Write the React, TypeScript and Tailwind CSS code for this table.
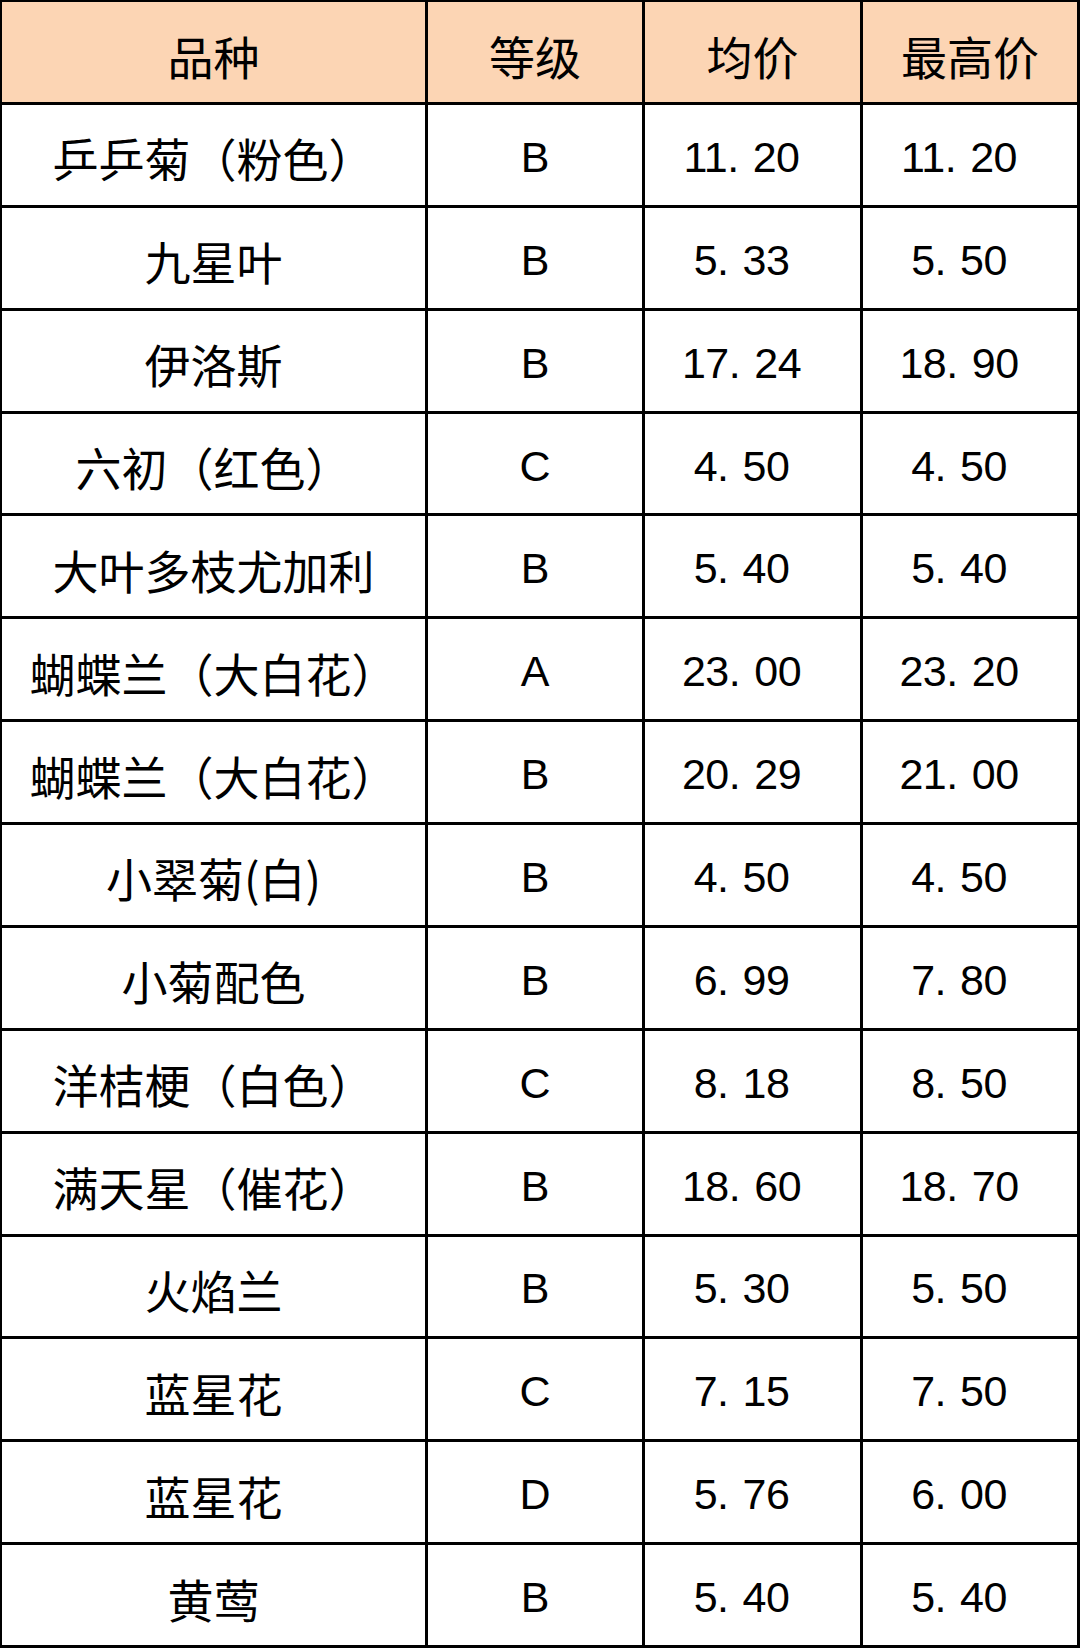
import React from 'react'

type Row = { name: string; grade: string; avg: string; max: string }

const ROWS: Row[] = [
  { name: '乒乒菊（粉色）', grade: 'B', avg: '11.20', max: '11.20' },
  { name: '九星叶', grade: 'B', avg: '5.33', max: '5.50' },
  { name: '伊洛斯', grade: 'B', avg: '17.24', max: '18.90' },
  { name: '六初（红色）', grade: 'C', avg: '4.50', max: '4.50' },
  { name: '大叶多枝尤加利', grade: 'B', avg: '5.40', max: '5.40' },
  { name: '蝴蝶兰（大白花）', grade: 'A', avg: '23.00', max: '23.20' },
  { name: '蝴蝶兰（大白花）', grade: 'B', avg: '20.29', max: '21.00' },
  { name: '小翠菊(白)', grade: 'B', avg: '4.50', max: '4.50' },
  { name: '小菊配色', grade: 'B', avg: '6.99', max: '7.80' },
  { name: '洋桔梗（白色）', grade: 'C', avg: '8.18', max: '8.50' },
  { name: '满天星（催花）', grade: 'B', avg: '18.60', max: '18.70' },
  { name: '火焰兰', grade: 'B', avg: '5.30', max: '5.50' },
  { name: '蓝星花', grade: 'C', avg: '7.15', max: '7.50' },
  { name: '蓝星花', grade: 'D', avg: '5.76', max: '6.00' },
  { name: '黄莺', grade: 'B', avg: '5.40', max: '5.40' },
]

const cell = 'flex items-center justify-center border-r-[3px] border-b-[3px] border-black pt-[5px] leading-none text-black'
const cjk = "font-['Noto_Sans_CJK_SC',sans-serif] text-[46px]"
const latin = "font-['Liberation_Sans','Noto_Sans_CJK_SC',sans-serif] text-[43px]"

// numbers show as "11. 20" in the source (Hei font spacing)
function Price({ value }: { value: string }) {
  const [int, dec] = value.split('.')
  return (
    <span className="whitespace-pre pr-[22px] tracking-[-0.5px]">
      {int}.<span className="inline-block w-[14px]" />{dec}
    </span>
  )
}

export default function App() {
  return (
    <div className="h-[1648px] w-[1080px] bg-white">
      <div className="grid h-full w-full grid-cols-[426px_217px_218px_1fr] grid-rows-[103px_repeat(15,minmax(0,1fr))] border-l-2 border-t-2 border-black">
        {['品种', '等级', '均价', '最高价'].map((h) => (
          <div key={h} className={`${cell} ${cjk} bg-[#FCD5B4]`}>
            {h}
          </div>
        ))}
        {ROWS.map((r, i) => (
          <React.Fragment key={i}>
            <div className={`${cell} ${cjk}`}>{r.name}</div>
            <div className={`${cell} ${latin}`}>{r.grade}</div>
            <div className={`${cell} ${latin}`}>
              <Price value={r.avg} />
            </div>
            <div className={`${cell} ${latin}`}>
              <Price value={r.max} />
            </div>
          </React.Fragment>
        ))}
      </div>
    </div>
  )
}
